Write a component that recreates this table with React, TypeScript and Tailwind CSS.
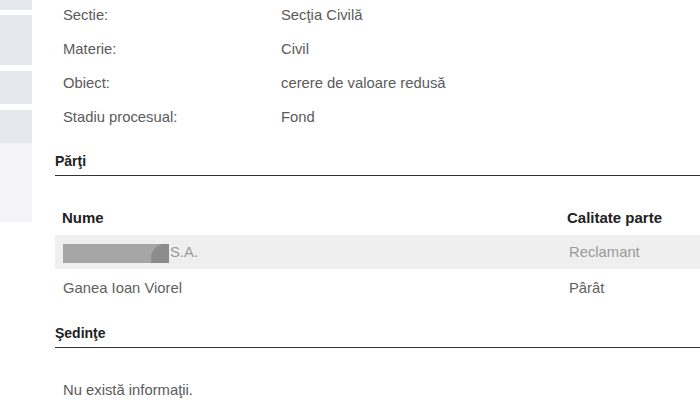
const fields = [
  ["Sectie:", "Secţia Civilă"],
  ["Materie:", "Civil"],
  ["Obiect:", "cerere de valoare redusă"],
  ["Stadiu procesual:", "Fond"],
];

function SectionTitle({ children }: { children: React.ReactNode }) {
  return (
    <div className="border-b border-[#333] pb-[6px] text-[14px] font-bold leading-[16px] text-[#1e1e1e]">
      {children}
    </div>
  );
}

export default function App() {
  return (
    <div
      className="flex h-[420px] w-[700px] overflow-hidden bg-white"
      style={{ fontFamily: '"Liberation Sans", Arial, sans-serif' }}
    >
      {/* left rail, mostly cut off */}
      <div className="flex w-[32px] shrink-0 flex-col">
        <div className="h-[10px] bg-[#e7e8ed]" />
        <div className="mt-[5px] h-[50px] bg-[#e7e8ed]" />
        <div className="mt-[6px] h-[33px] bg-[#e7e8ed]" />
        <div className="mt-[6px] h-[33px] bg-[#e7e8ed]" />
        <div className="h-[79px] bg-[#f5f5f7]" />
      </div>

      <div className="ml-[23px] flex-1">
        <div className="-mt-[2px] flex flex-col">
          {fields.map(([label, value]) => (
            <div key={label} className="flex h-[34px] items-center text-[14.8px] text-[#5a5a5a]">
              <span className="w-[226px] pl-[8px]">{label}</span>
              <span>{value}</span>
            </div>
          ))}
        </div>

        <div className="mt-[19px]">
          <SectionTitle>Părţi</SectionTitle>
        </div>

        <div className="mt-[25px]">
          <div className="flex h-[34px] items-center text-[15px] font-bold text-[#222]">
            <span className="w-[505px] pl-[7px]">Nume</span>
            <span className="pl-[7px]">Calitate parte</span>
          </div>
          <div className="flex h-[34px] items-center bg-[#efefef] text-[14.8px] text-[#9a9a9a]">
            <div className="flex w-[505px] items-center pl-[8px]">
              <div className="mt-[2px] flex h-[19px] w-[106px] overflow-hidden bg-[#a6a6a6]">
                <div className="flex-1" />
                <div className="w-[18px] rounded-tl-[14px] bg-[#8c8c8c]" />
              </div>
              <span className="ml-[1px]">S.A.</span>
            </div>
            <span className="pl-[9px]">Reclamant</span>
          </div>
          <div className="flex h-[34px] items-center pt-[5px] text-[14.8px] text-[#5f5f5f]">
            <span className="w-[505px] pl-[8px]">Ganea Ioan Viorel</span>
            <span className="pl-[9px]">Pârât</span>
          </div>
        </div>

        <div className="mt-[22px]">
          <SectionTitle>Şedinţe</SectionTitle>
        </div>

        <div className="mt-[25px] flex h-[34px] items-center pl-[8px] text-[14.8px] text-[#5a5a5a]">
          Nu există informaţii.
        </div>
      </div>
    </div>
  );
}
